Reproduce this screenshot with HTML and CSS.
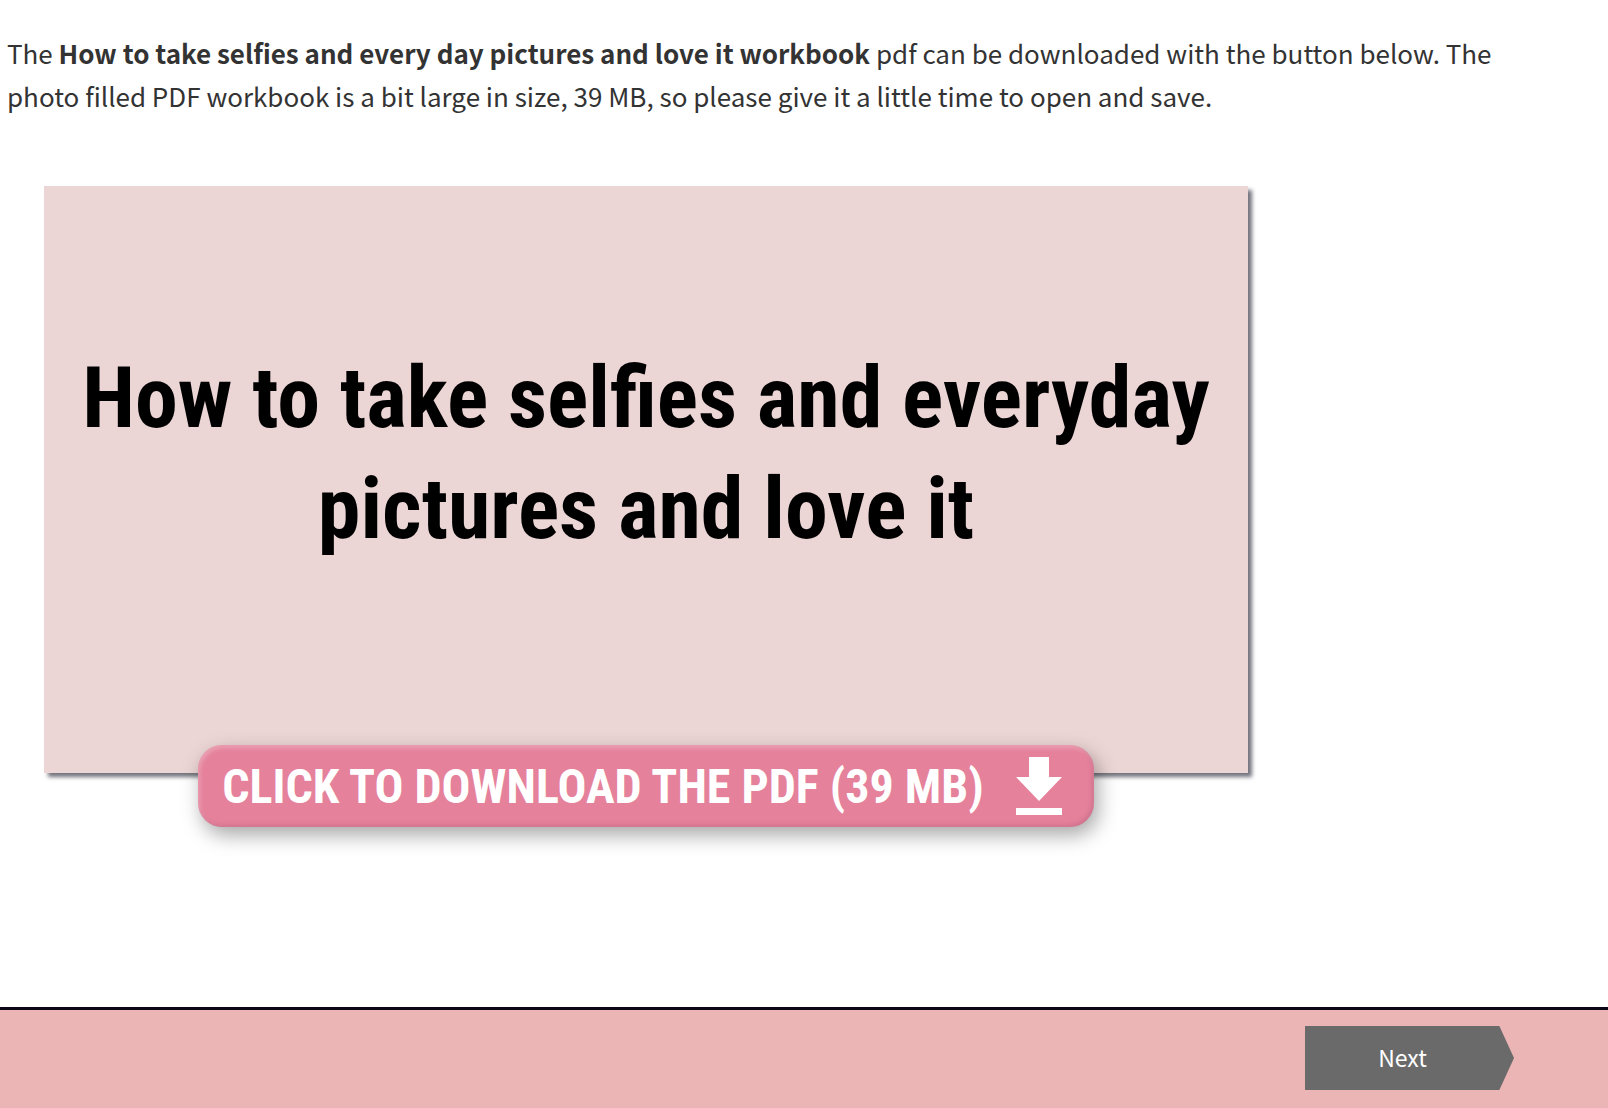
FILE: index.html
```html
<!DOCTYPE html>
<html lang="en">
<head>
    <meta charset="UTF-8">
    <meta name="viewport" content="width=device-width, initial-scale=1.0">
    <title>Workbook Download</title>
    <link rel="stylesheet" href="styles.css">
</head>
<body>
    <main class="lesson">
        <p class="intro">The <strong>How to take selfies and every day pictures and love it workbook</strong> pdf can be downloaded with the button below. The photo filled PDF workbook is a bit large in size, 39 MB, so please give it a little time to open and save.</p>

        <div class="workbook">
            <div class="cover">
                <h1>How to take selfies and everyday pictures and love it</h1>
            </div>
            <a class="download" href="#">
                <span>CLICK TO DOWNLOAD THE PDF (39 MB)</span>
                <svg class="download-icon" viewBox="0 0 46 58" aria-hidden="true">
                    <path d="M13 0h20v20h13L23 44 0 20h13z"/>
                    <path d="M0 51h46v7H0z"/>
                </svg>
            </a>
        </div>
    </main>

    <footer class="footer">
        <button class="next" type="button">Next</button>
    </footer>
</body>
</html>
```
FILE: styles.css
```css
* {
    box-sizing: border-box;
}

body {
    font-family: "Noto Sans CJK SC", sans-serif;
    background-color: #fff;
    color: #333;
    margin: 0;
    min-height: 100vh;
    display: flex;
    flex-direction: column;
}

.lesson {
    flex: 1;
    padding: 31px 100px 64px 7px;
}

.intro {
    margin: 0;
    font-size: 26px;
    line-height: 43px;
}

.workbook {
    display: flex;
    flex-direction: column;
    align-items: center;
    max-width: 1204px;
    margin: 69px 0 0 37px;
}

.cover {
    display: flex;
    align-items: center;
    justify-content: center;
    width: 100%;
    padding: 156px 24px 209px;
    background-color: #ecd5d5;
    box-shadow: 4px 4px 4px rgba(40, 40, 55, 0.65);
}

h1 {
    margin: 0;
    color: #000;
    font-family: "Roboto Condensed", "Liberation Sans Narrow", sans-serif;
    font-size: 86px;
    font-weight: bold;
    line-height: 111px;
    text-align: center;
}

.download {
    display: flex;
    align-items: center;
    gap: 32px;
    min-height: 82px;
    margin-top: -28px;
    padding: 0 32px 0 24px;
    border-radius: 24px;
    background-color: #e5819b;
    box-shadow: 4px 8px 20px rgba(0, 0, 0, 0.35), inset 2px 3px 4px rgba(255, 255, 255, 0.25), inset -2px -2px 4px rgba(120, 60, 90, 0.2);
    color: #fff;
    font-family: "Roboto Condensed", "Liberation Sans Narrow", sans-serif;
    font-size: 48px;
    font-weight: bold;
    text-decoration: none;
}

.download-icon {
    flex: none;
    width: 46px;
    height: 58px;
    fill: #fff;
}

.footer {
    display: flex;
    justify-content: flex-end;
    padding: 16px 94px 18px;
    border-top: 3px solid #0d0518;
    background-color: #ebb5b5;
}

.next {
    width: 209px;
    height: 64px;
    padding: 0 14px 2px 0;
    border: none;
    background-color: #6a6a6a;
    clip-path: polygon(0 0, 93% 0, 100% 50%, 93% 100%, 0 100%);
    color: #fff;
    font-family: inherit;
    font-size: 23px;
    cursor: pointer;
}

.next:hover {
    background-color: #555;
}
```
